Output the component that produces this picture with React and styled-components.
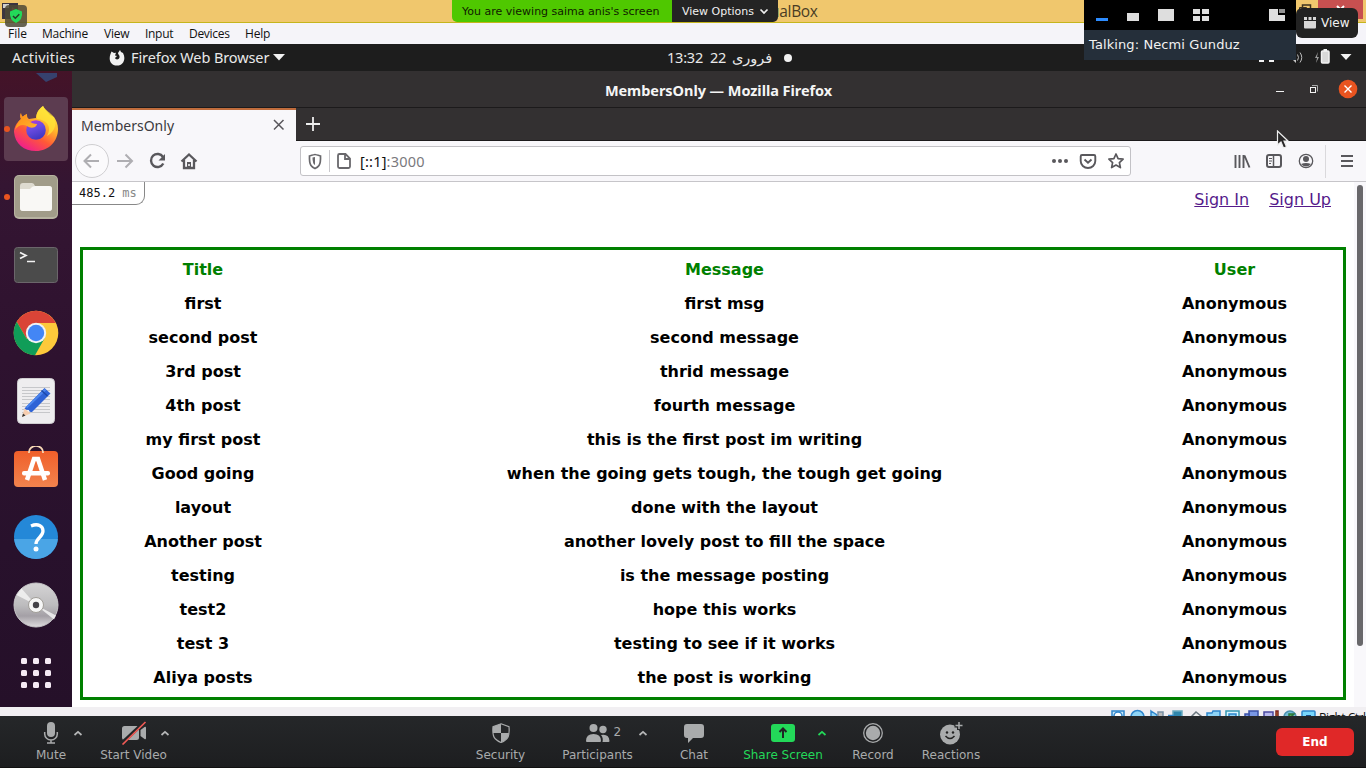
import React from 'react';
import styled, { createGlobalStyle } from 'styled-components';

const ubuntu = '"Noto Sans", "Open Sans", "DejaVu Sans", sans-serif';
const dejavu = '"DejaVu Sans", sans-serif';

const GlobalStyle = createGlobalStyle`
  * { box-sizing: border-box; }
  body { margin: 0; overflow: hidden; background: #000; }
  svg { display: block; flex: none; }
`;

const Screen = styled.div`
  position: relative;
  width: 1366px;
  height: 768px;
  display: flex;
  flex-direction: column;
  overflow: hidden;
  font-family: ${dejavu};
  white-space: nowrap;
`;

/* Host window */
const HostTitle = styled.header`
  position: relative;
  height: 23px;
  flex: none;
  background: #f0c76d;
  border-bottom: 1px solid #c5b51d;
  padding-left: 770px;
  font: 15.5px/23px "Open Sans", sans-serif;
  letter-spacing: -0.3px;
  color: #4a3c24;
`;
const HostControls = styled.div`
  position: absolute;
  right: 3px;
  top: 0;
  display: flex;
`;
const HostClose = styled.div`
  width: 45px;
  height: 19px;
  background: #c75050;
`;
const HostMenu = styled.nav`
  height: 21px;
  flex: none;
  display: flex;
  background: #f5f4f9;
  font: 12px/22px "Open Sans", sans-serif;
  color: #111;
`;
const HostMenuItem = styled.span`
  width: ${(p) => p.$w}px;
  margin-left: ${(p) => p.$gap}px;
  letter-spacing: ${(p) => p.$ls || 0}px;
`;

/* Guest desktop */
const TopBar = styled.div`
  height: 27px;
  flex: none;
  display: flex;
  align-items: center;
  background: #1d1d1d;
  color: #e9e9e9;
  font: 14.5px/27px ${ubuntu};
`;
const TopText = styled.span`
  width: ${(p) => p.$w}px;
  margin-left: ${(p) => p.$gap}px;
  letter-spacing: ${(p) => p.$ls || 0}px;
`;
const Dot = styled.i`
  width: 8px;
  height: 8px;
  margin-left: 9px;
  border-radius: 50%;
  background: #f2f2f2;
`;
const Tray = styled.div`
  margin-left: auto;
  display: flex;
`;
const Desktop = styled.div`
  height: 636px;
  flex: none;
  display: flex;
`;
const Dock = styled.aside`
  width: 72px;
  flex: none;
  display: flex;
  flex-direction: column;
  background: linear-gradient(#441328 0, #341532 18%, #2e122f 45%, #28112c 75%, #251029 100%);
`;
const DockPeek = styled.div`
  height: 24px;
  padding: 2px 0 0 36px;
`;
const DockItem = styled.div`
  position: relative;
  width: 64px;
  height: 64px;
  margin: 2px 4px;
  border-radius: 4px;
  display: flex;
  align-items: center;
  justify-content: center;
  background: ${(p) => (p.$active ? '#5c3c50' : 'transparent')};
  &::before {
    content: "";
    display: ${(p) => (p.$running ? 'block' : 'none')};
    position: absolute;
    left: 0;
    top: 29px;
    width: 6px;
    height: 6px;
    border-radius: 50%;
    background: #e95420;
  }
`;
const Browser = styled.section`
  flex: 1;
  display: flex;
  flex-direction: column;
  background: #fff;
`;
const WindowTitle = styled.div`
  position: relative;
  height: 37px;
  flex: none;
  background: #333031;
  border-bottom: 1px solid #1c1a1b;
  text-align: center;
  padding-right: 1px;
  font: bold 14.5px/38px ${ubuntu};
  letter-spacing: -0.05px;
  color: #f5f5f5;
`;
const WindowButtons = styled.div`
  position: absolute;
  right: 7px;
  top: 8px;
`;
const TabStrip = styled.div`
  height: 33px;
  flex: none;
  display: flex;
  background: #333031;
  border-bottom: 1px solid #1c1a1b;
`;
const Tab = styled.div`
  width: 224px;
  height: 33px;
  padding: 0 10px 1px 9px;
  display: flex;
  align-items: center;
  justify-content: space-between;
  background: #f8f7fa;
  border-top: 2px solid #c06c3c;
  font: 14px/29px ${ubuntu};
  color: #3c3a40;
`;
const NewTab = styled.div`
  padding: 9px 0 0 10px;
`;
const NavBar = styled.div`
  height: 41px;
  flex: none;
  display: flex;
  align-items: center;
  background: #f8f7fa;
  border-bottom: 1px solid #c6c5c9;
`;
const NavIcons = styled.div`
  width: 228px;
`;
const UrlBar = styled.div`
  width: 831px;
  height: 30px;
  display: flex;
  align-items: center;
  background: #fff;
  border: 1px solid #c3c2c6;
  border-radius: 3px;
  font: 14.5px/29px ${ubuntu};
  color: #7a797d;
`;
const Host = styled.b`
  font-weight: 400;
  color: #0c0c0d;
`;
const Url = styled.span`
  margin-left: 4px;
  flex: 1;
  letter-spacing: 0.2px;
`;
const MenuIcons = styled.div`
  margin-left: auto;
`;

/* Page */
const Page = styled.main`
  position: relative;
  flex: 1;
  background: #fff;
  padding: 0 20px 0 8px;
`;
const Timer = styled.div`
  position: absolute;
  left: 0;
  top: 0;
  width: 73px;
  height: 23px;
  padding-left: 7px;
  border: 1px solid #888;
  border-width: 0 1px 1px 0;
  border-radius: 0 0 9px 0;
  font: 12px/22px "DejaVu Sans Mono", monospace;
  color: #111;
  span { color: #888; }
`;
const Links = styled.nav`
  height: 65px;
  display: flex;
  justify-content: flex-end;
  gap: 20px;
  padding: 8px 15px 0 0;
  font-size: 16px;
  line-height: 19px;
`;
const Link = styled.a`
  color: #551a8b;
  text-decoration: underline;
`;
const Table = styled.div`
  height: 453px;
  padding: 3px 0 2px;
  border: 3px solid #008000;
`;
const Row = styled.div`
  display: grid;
  grid-template-columns: 240px 803px 217px;
  height: 34px;
  text-align: center;
  font: bold 16px/34px ${dejavu};
  color: ${(p) => (p.$head ? '#008000' : '#000')};
`;
const ScrollTrack = styled.div`
  position: absolute;
  right: 0;
  top: 0;
  width: 12px;
  height: 525px;
  padding: 3px 3px;
  background: #f9f8fb;
`;
const ScrollThumb = styled.div`
  height: 461px;
  border-radius: 3px;
  background: #69686b;
`;

const StatusStrip = styled.div`
  height: 9px;
  flex: none;
  display: flex;
  overflow: hidden;
  background: #f1eff2;
  padding-left: 1110px;
`;
const StatusText = styled.span`
  font: 12px/22px "Open Sans", sans-serif;
  color: #111;
  margin-left: 2px;
  letter-spacing: -0.5px;
`;

/* Meeting controls */
const Toolbar = styled.footer`
  height: 52px;
  flex: none;
  display: flex;
  background: linear-gradient(#252729, #1d1e20);
  border-bottom: 1px solid #111;
`;
const Tool = styled.div`
  position: relative;
  width: ${(p) => p.$w}px;
  margin-left: ${(p) => p.$gap}px;
  display: flex;
  flex-direction: column;
  align-items: center;
  font-size: 12px;
  line-height: 14px;
  color: ${(p) => (p.$green ? '#23d959' : '#a9abac')};
`;
const ToolIcon = styled.div`
  height: 32px;
  display: flex;
  align-items: center;
  padding-top: 2px;
`;
const Caret = styled.div`
  position: absolute;
  top: 14px;
  left: ${(p) => p.$x}px;
`;
const Count = styled.span`
  position: absolute;
  left: 61px;
  top: 9px;
`;
const EndButton = styled.button`
  width: 78px;
  height: 28px;
  margin: 12px 12px 0 auto;
  padding: 0;
  border: 0;
  border-radius: 6px;
  background: #e02828;
  color: #fff;
  font: bold 12px/28px ${dejavu};
`;

/* Floating meeting overlays */
const ShareBanner = styled.div`
  position: absolute;
  left: 452px;
  top: 0;
  display: flex;
  height: 22px;
  border-radius: 0 0 5px 5px;
  overflow: hidden;
  font-size: 11px;
  line-height: 23px;
`;
const Viewing = styled.span`
  width: 220px;
  padding-left: 10px;
  background: #4fc800;
  color: #102000;
`;
const ViewOptions = styled.span`
  width: 106px;
  padding-left: 10px;
  display: flex;
  align-items: center;
  gap: 5px;
  background: #242424;
  color: #f0f0f0;
`;
const Gallery = styled.div`
  position: absolute;
  left: 1084px;
  top: 0;
  width: 212px;
  height: 60px;
  background: #000;
`;
const Talking = styled.div`
  height: 30px;
  padding-left: 5px;
  background: #252f3a;
  color: #f2f2f2;
  font-size: 13px;
  line-height: 29px;
  letter-spacing: 0.1px;
`;
const ViewButton = styled.div`
  position: absolute;
  left: 1296px;
  top: 8px;
  width: 62px;
  height: 30px;
  padding-left: 8px;
  display: flex;
  align-items: center;
  gap: 5px;
  border-radius: 6px;
  background: #222;
  color: #f2f2f2;
  font-size: 12px;
`;
const ShieldBadge = styled.div`
  position: absolute;
  left: 2px;
  top: 2px;
`;
const Cursor = styled.div`
  position: absolute;
  left: 1276px;
  top: 130px;
`;

const posts = [
  ['first', 'first msg'],
  ['second post', 'second message'],
  ['3rd post', 'thrid message'],
  ['4th post', 'fourth message'],
  ['my first post', 'this is the first post im writing'],
  ['Good going', 'when the going gets tough, the tough get going'],
  ['layout', 'done with the layout'],
  ['Another post', 'another lovely post to fill the space'],
  ['testing', 'is the message posting'],
  ['test2', 'hope this works'],
  ['test 3', 'testing to see if it works'],
  ['Aliya posts', 'the post is working'],
];

const FirefoxIcon = () => (
  <svg width="46" height="48" viewBox="0 0 46 48">
    <defs>
      <linearGradient id="fx" x1="0.8" y1="0.05" x2="0.25" y2="0.95">
        <stop offset="0" stopColor="#fff044" /><stop offset=".35" stopColor="#ffb32a" />
        <stop offset=".65" stopColor="#ff5a36" /><stop offset="1" stopColor="#f0208a" />
      </linearGradient>
      <linearGradient id="fxo" x1="0" y1="0" x2="0.4" y2="1">
        <stop offset="0" stopColor="#c035d8" /><stop offset=".5" stopColor="#6a4be0" /><stop offset="1" stopColor="#4338c4" />
      </linearGradient>
      <linearGradient id="fxf" x1="0" y1="0" x2="1" y2="1">
        <stop offset="0" stopColor="#ff8a16" /><stop offset="1" stopColor="#ffb62c" />
      </linearGradient>
    </defs>
    <path d="M8 8c-1 2-1 4 0 6C3 18 1 23 1 27c1 12 10 19 22 19 13 0 22-10 22-22 0-5-2-9-4-12l-4-2c-2-3-5-5-7-9-5 4-7 8-7 12l-7 1c-2-1-2-3-2-5-2 1-4 2-4 3-1-1-2-2-2-4z" fill="url(#fx)" />
    <path d="M30 1c-6 4-7 9-6 13 11 1 15 9 10 17 9-5 10-13 6-20-2-3-7-5-10-10z" fill="#ffe437" opacity=".75" />
    <circle cx="23" cy="25" r="9.800" fill="url(#fxo)" />
    <path d="M8 8c-1 2-1 4 0 6-3 3-5 6-6 11 3-5 8-6 12-4 3 2 5 2 8 1 1-1 2-2 2-3-3 0-6-1-8-3-3-1-3-3-2-7-2 1-4 2-4 3-1-1-2-2-2-4z" fill="url(#fxf)" />
  </svg>
);
const FilesIcon = () => (
  <svg width="44" height="44" viewBox="0 0 44 44">
    <rect width="44" height="44" rx="5" fill="#b7b3a0" />
    <rect x="1" y="1" width="42" height="41" rx="4" fill="#a19c89" />
    <path d="M6 11q0-3 3-3h9q2 0 3 3h14q3 0 3 3v19q0 3-3 3H9q-3 0-3-3z" fill="#dedbd0" />
    <path d="M6 14h10q2-3 5-3h14q3 0 3 3v19q0 3-3 3H9q-3 0-3-3z" fill="#f9f8f5" />
  </svg>
);
const TerminalIcon = () => (
  <svg width="44" height="36" viewBox="0 0 44 36">
    <rect x=".5" y=".5" width="43" height="35" rx="3" fill="#4b4b4b" stroke="#6b666b" />
    <path d="M6 5.5l6 3-6 3M13 14.5h8" fill="none" stroke="#f3f3f3" strokeWidth="1.7" />
  </svg>
);
const ChromeIcon = () => (
  <svg width="46" height="46" viewBox="0 0 46 46">
    <circle cx="23" cy="23" r="22.3" fill="#fdc93b" />
    <path d="M3.7 11.8A22.3 22.3 0 0 1 42.8 13H23L13.5 28.5z" fill="#da4437" />
    <path d="M3.7 11.8A22.3 22.3 0 0 0 22 45.3l9.5-16.8-18 0z" fill="#109d58" />
    <circle cx="23" cy="23" r="10.2" fill="#f1f3f5" />
    <circle cx="23" cy="23" r="8.2" fill="#4386f5" />
  </svg>
);
const EditorIcon = () => (
  <svg width="38" height="46" viewBox="0 0 38 46">
    <rect x=".5" y=".5" width="37" height="45" rx="4" fill="#eeedef" stroke="#cfcdd0" />
    <path d="M5 9.500h28M5 12.500h28M5 15.500h28M5 18.500h28M5 21.500h28M5 25.500h28M5 28.500h28M5 31.500h28M5 34.500h28" stroke="#c6c7ca" strokeWidth="1" />
    <path d="M5 39l2.500-8.500 6 5z" fill="#f6cdb0" /><path d="M5 39l1-3.500 2.500 2z" fill="#333" />
    <path d="M7.500 30.500L27.500 10l6 5.500-18.500 18.500q-3 0-3-2-3 0-4.500-1.500z" fill="#2f63d6" />
    <path d="M9.500 29.500L28.500 11.500" stroke="#4c86ee" strokeWidth="2" />
    <path d="M24.500 12.500l6 5.500" stroke="#1c48a8" strokeWidth="1.500" />
  </svg>
);
const SoftwareIcon = () => (
  <svg width="44" height="46" viewBox="0 0 44 46">
    <defs><linearGradient id="sw" x2="0" y2="1"><stop stopColor="#f05f2a" /><stop offset="1" stopColor="#f2834e" /></linearGradient></defs>
    <rect y="5" width="44" height="36" rx="4" fill="url(#sw)" />
    <path d="M15 7V6a7 6 0 0 1 14 0v1" fill="none" stroke="#f8d9b6" strokeWidth="1.700" />
    <path d="M13 34l7-21h4l7 21" fill="none" stroke="#fff" strokeWidth="4.500" />
    <rect x="8" y="25" width="28" height="4.500" rx="2" fill="#fff" />
  </svg>
);
const HelpIcon = () => (
  <svg width="44" height="44" viewBox="0 0 44 44">
    <circle cx="22" cy="22" r="22" fill="#2488d8" />
    <path d="M.1 24h43.800a22 22 0 0 1-43.800 0z" fill="#4aa5e6" />
    <path d="M17 11c7-3 12 0 12 5 0 6-7 7-7 13" fill="none" stroke="#fff" strokeWidth="3.300" />
    <circle cx="22" cy="34" r="2.500" fill="#fff" />
  </svg>
);
const DiscIcon = () => (
  <svg width="46" height="46" viewBox="0 0 46 46">
    <defs><linearGradient id="cd" x2="0" y2="1"><stop stopColor="#d5d4d5" /><stop offset=".5" stopColor="#bdbcbe" /><stop offset=".75" stopColor="#a4a0a6" /><stop offset="1" stopColor="#dedcde" /></linearGradient></defs>
    <circle cx="23" cy="23" r="22" fill="url(#cd)" stroke="#c9c8ca" />
    <path d="M23 23L3.500 13l5-6.500zM23 23l18 14.500 2-4z" fill="#f3f3f3" opacity=".85" />
    <circle cx="23" cy="23" r="7.500" fill="#f6f6f6" stroke="#a19e98" /><circle cx="23" cy="23" r="3.200" fill="#444248" />
  </svg>
);
const AppsIcon = () => (
  <svg width="30" height="30" viewBox="0 0 30 30" fill="#f5eaf4">
    {[0, 12, 24].map((y) => [0, 12, 24].map((x) => <rect key={`${x}-${y}`} x={x} y={y} width="6" height="6" rx="1.500" />))}
  </svg>
);

const dock = [
  { icon: FirefoxIcon, active: true, running: true },
  { icon: FilesIcon, running: true },
  { icon: TerminalIcon }, { icon: ChromeIcon }, { icon: EditorIcon },
  { icon: SoftwareIcon }, { icon: HelpIcon }, { icon: DiscIcon }, { icon: AppsIcon },
];

const CaretUp = ({ color = '#b5b6b7' }) => (
  <svg width="10" height="6" viewBox="0 0 10 6"><path d="M1.500 5L5 1.800 8.500 5" fill="none" stroke={color} strokeWidth="1.700" /></svg>
);

export default function App() {
  return (
    <Screen>
      <GlobalStyle />
      <HostTitle>
        ualBox
        <HostControls>
          <svg width="20" height="19" fill="none" stroke="#3c331f"><path d="M4.500 7v-2h8v7h-2" strokeWidth="1.500" /><path d="M1.500 7.500h7v5h-7z" /></svg>
          <HostClose><svg width="45" height="19"><path d="M19 6l7 7M26 6l-7 7" stroke="#fff" strokeWidth="2" /></svg></HostClose>
        </HostControls>
      </HostTitle>
      <HostMenu>
        <HostMenuItem $gap={8} $w={34} $ls={0}>File</HostMenuItem>
        <HostMenuItem $gap={0} $w={62} $ls={-0.25}>Machine</HostMenuItem>
        <HostMenuItem $gap={0} $w={41} $ls={-0.25}>View</HostMenuItem>
        <HostMenuItem $gap={0} $w={44} $ls={-0.3}>Input</HostMenuItem>
        <HostMenuItem $gap={0} $w={56} $ls={-0.3}>Devices</HostMenuItem>
        <HostMenuItem $gap={0} $w={40} $ls={-0.2}>Help</HostMenuItem>
      </HostMenu>
      <TopBar>
        <TopText $gap={12} $w={97} $ls={0.25}>Activities</TopText>
        <svg width="16" height="16" viewBox="0 0 16 16">
          <path d="M2.500 1.500L5 3l2-.2L6 5.500 8 6 6 8c.5 2 4 2 4.500-.5C11 5 9 4.500 9 3l2-3 1 2 2 1c3 5 1 12.500-6 12.500S-.5 9 1.500 4z" fill="#f2f2f2" />
        </svg>
        <TopText $gap={6} $w={142} $ls={-0.1}>Firefox Web Browser</TopText>
        <svg width="12" height="7" viewBox="0 0 12 7"><path d="M0 0h12L6 6.500z" fill="#f2f2f2" /></svg>
        <TopText $gap={382} $w={43} $ls={-0.2}>13:32</TopText>
        <TopText $gap={0} $w={22} $ls={-0.2}>22</TopText>
        <TopText $gap={0} $w={43}>فروری</TopText>
        <Dot />
        <Tray>
          <svg width="116" height="27" viewBox="0 0 116 27" fill="#f2f2f2">
            <path d="M9 15h5v3H9zM19 15h5v3h-5z" />
            <path d="M41 11h2l3-3v11l-3-3h-2z" opacity=".8" />
            <path d="M47.500 10.500q2 3 0 6M50 8.500q3.500 5 0 10" fill="none" stroke="#bbb" />
            <path d="M68 8l-3 6h2l-1 5 3-6h-2z" opacity=".6" />
            <rect x="71.500" y="7" width="7.500" height="12" rx="1" stroke="#f2f2f2" strokeWidth="1.500" fill="#d9d9d9" /><path d="M73.500 5h3.500v2h-3.500z" />
            <path d="M90.500 10h11l-5.500 6z" />
          </svg>
        </Tray>
      </TopBar>
      <Desktop>
        <Dock>
          <DockPeek><svg width="21" height="10"><path d="M0 0h21v4l-11 5z" fill="#31558c" opacity=".7" /></svg></DockPeek>
          {dock.map(({ icon: Icon, active, running }, i) => (
            <DockItem key={i} $active={active} $running={running}><Icon /></DockItem>
          ))}
        </Dock>
        <Browser>
          <WindowTitle>
            MembersOnly — Mozilla Firefox
            <WindowButtons>
              <svg width="84" height="20" viewBox="0 0 84 20" fill="none">
                <path d="M1 12.500h8" stroke="#f2f2f2" />
                <path d="M37 6.500h5.500v6" stroke="#aaa" /><rect x="35.500" y="8.500" width="5" height="5" stroke="#f2f2f2" />
                <circle cx="73" cy="10" r="9.300" fill="#e95420" /><path d="M69.500 6.500l7 7M76.500 6.500l-7 7" stroke="#fff" strokeWidth="1.400" />
              </svg>
            </WindowButtons>
          </WindowTitle>
          <TabStrip>
            <Tab>
              MembersOnly
              <svg width="14" height="14"><path d="M2 2l9.500 9.500M11.500 2L2 11.500" stroke="#58565b" strokeWidth="1.500" /></svg>
            </Tab>
            <NewTab><svg width="14" height="14"><path d="M7 0v14M0 7h14" stroke="#eee" strokeWidth="1.800" /></svg></NewTab>
          </TabStrip>
          <NavBar>
            <NavIcons>
              <svg width="228" height="40" viewBox="72 141 228 40" fill="none" stroke="#59585c" strokeWidth="2">
                <circle cx="92" cy="161" r="16.500" fill="#fbfafc" stroke="#cfced1" strokeWidth="1" />
                <path d="M99 161H85.500M91 154.500l-6.500 6.500 6.500 6.500M117 161h14.500M125.500 154.500l6.500 6.500-6.500 6.500" stroke="#afaeb2" />
                <path d="M163 157a6.500 6.500 0 1 0 .3 6.500" strokeWidth="2.400" /><path d="M165 154v6.500h-6.500z" fill="#59585c" stroke="none" />
                <path d="M181.500 161.500l7.500-7 7.500 7M184 160v8h10v-8" strokeWidth="2.300" /><path d="M187 162h4v6h-4z" fill="#59585c" stroke="none" /><circle cx="189" cy="165" r="1" fill="#fff" stroke="none" />
              </svg>
            </NavIcons>
            <UrlBar>
              <svg width="55" height="28" viewBox="301 147 55 28" fill="none" stroke="#69686c">
                <path d="M309.500 156q5-1.500 5.500-1.500t5.500 1.500q.3 7-1.500 9.500-1.500 2-4 3-2.500-1-4-3-1.800-2.500-1.500-9.500z" strokeWidth="1.700" /><path d="M315 157v8q-2.500-1-2.500-7.500z" fill="#69686c" stroke="none" />
                <path d="M329.500 150v22" stroke="#c9c8cc" />
                <path d="M339.500 154h6l4.500 4.500v8q0 1.500-1.500 1.500h-9q-1.500 0-1.500-1.500v-11q0-1.500 1.500-1.500zM345 154v5h5" strokeWidth="1.800" />
              </svg>
              <Url><Host>[::1]</Host>:3000</Url>
              <svg width="80" height="28" viewBox="1050 147 80 28" fill="none" stroke="#59585c" strokeWidth="1.900">
                <g fill="#59585c" stroke="none"><circle cx="1054" cy="161" r="2" /><circle cx="1060" cy="161" r="2" /><circle cx="1066" cy="161" r="2" /></g>
                <path d="M1082 155h12q1.300 0 1.300 1.500v4.500a7.300 7 0 0 1-14.600 0v-4.500q0-1.500 1.300-1.500zM1084.500 159.500l3.500 3.300 3.500-3.300" />
                <path d="M1116 154l2.100 4.600 5 .6-3.700 3.400 1 5-4.400-2.500-4.400 2.500 1-5-3.700-3.400 5-.6z" strokeWidth="1.700" strokeLinejoin="round" />
              </svg>
            </UrlBar>
            <MenuIcons>
              <svg width="146" height="40" viewBox="1220 141 146 40" fill="none" stroke="#59585c" strokeWidth="2">
                <path d="M1235.500 155v13M1239.500 155v13M1243.500 155v13M1244.500 155.500l5 12" strokeWidth="1.900" />
                <rect x="1267" y="155" width="14" height="12" rx="2" /><path d="M1273.500 155v12" strokeWidth="1.500" /><path d="M1269 158.500h3M1269 161h3M1269 163.500h2" strokeWidth="1" />
                <circle cx="1306" cy="161" r="6.700" strokeWidth="1.300" /><circle cx="1306" cy="159" r="3" fill="#59585c" stroke="none" /><path d="M1301 164q5-2 10 0-5 5-10 0z" fill="#59585c" stroke="none" />
                <path d="M1325.500 145v33" stroke="#dad9dc" strokeWidth="1" />
                <path d="M1341 156h12M1341 161h12M1341 166h12" />
              </svg>
            </MenuIcons>
          </NavBar>
          <Page>
            <Timer>485.2 <span>ms</span></Timer>
            <Links><Link>Sign In</Link><Link>Sign Up</Link></Links>
            <Table>
              <Row $head><span>Title</span><span>Message</span><span>User</span></Row>
              {posts.map(([title, message]) => (
                <Row key={title}><span>{title}</span><span>{message}</span><span>Anonymous</span></Row>
              ))}
            </Table>
            <ScrollTrack><ScrollThumb /></ScrollTrack>
          </Page>
        </Browser>
      </Desktop>
      <StatusStrip>
        <svg width="207" height="9" viewBox="1110 707 207 9" fill="#8fd4f5" stroke="#2f86cc" strokeWidth="1.500">
          <rect x="1112" y="711" width="12" height="9" fill="#c6e6f8" /><circle cx="1118" cy="716" r="4" fill="#fff" />
          <circle cx="1137.500" cy="717" r="6.500" />
          <path d="M1151 711l6 4v3h-6z" /><path d="M1158 712h5v6h-5z" fill="#bbb" stroke="#7890a4" />
          <rect x="1173" y="711" width="9" height="7" fill="#2f86ac" stroke="#6baac0" /><path d="M1168 715.500h6" />
          <path d="M1191 717l5-5 5 4-4 4z" fill="#eee" stroke="#6c7880" />
          <path d="M1207 717v-4h5l1-2h7v6z" />
          <rect x="1226" y="711" width="13" height="9" fill="#d7f5ff" stroke="#3597b3" /><rect x="1229" y="714" width="7" height="5" />
          <path d="M1249 711h9v7h-9z" fill="#7997e4" stroke="#3a51a7" /><path d="M1245 714h4v4h-4z" fill="#7997e4" stroke="#3a51a7" />
          <path d="M1264 712h9v6h-9z" fill="#b8b9ed" stroke="#4a4aa0" /><path d="M1276 711h2v6h-2z" fill="#e0a024" stroke="#7c2420" />
          <circle cx="1290" cy="717" r="6" fill="#74bdd8" stroke="#4b8fae" /><path d="M1289 714h5l-5 5z" fill="#55a850" stroke="#28773b" />
          <rect x="1302" y="711" width="13" height="9" rx="1" fill="#78d6fb" /><path d="M1306 715h5v3h-5z" fill="#154c88" stroke="none" />
        </svg>
        <StatusText>Right Ctrl</StatusText>
      </StatusStrip>
      <Toolbar>
        <Tool $gap={21} $w={60}>
          <ToolIcon><svg width="16" height="24" viewBox="0 0 16 24"><rect x="4" y="1" width="8" height="15" rx="4" fill="#a9abac" /><path d="M1.700 11v2a6.300 6 0 0 0 12.600 0v-2M8 19v3M4 22h8" fill="none" stroke="#a9abac" strokeWidth="1.500" /></svg></ToolIcon>
          Mute<Caret $x={52}><CaretUp /></Caret>
        </Tool>
        <Tool $gap={12.5} $w={80}>
          <ToolIcon><svg width="26" height="24" viewBox="0 0 26 24"><rect x="1" y="5" width="17" height="14" rx="2.500" fill="#a9abac" /><path d="M19.500 9l4-3q1.500-1 1.500 1v10q0 2-1.500 1l-4-3z" fill="#a9abac" /><path d="M1.500 21.500L24 .5" stroke="#222426" strokeWidth="3.500" /><path d="M1.500 23.500L24.500 1" stroke="#f05a55" strokeWidth="1.700" /></svg></ToolIcon>
          Start Video<Caret $x={66}><CaretUp /></Caret>
        </Tool>
        <Tool $gap={297} $w={60}>
          <ToolIcon><svg width="18" height="20" viewBox="0 0 18 20"><path d="M9 .8l8 3q.8 9-2.200 12Q12 18.500 9 19.500 6 18.500 3.200 15.800.2 12.800 1 3.800z" fill="#252729" stroke="#a9abac" strokeWidth="1.200" /><path d="M9 .8V10H1Q.800 6 1 3.800zM9 10h8q-.5 4-2.200 5.800Q12 18.500 9 19.500z" fill="#a9abac" /></svg></ToolIcon>
          Security
        </Tool>
        <Tool $gap={22} $w={90}>
          <ToolIcon><svg width="24" height="20" viewBox="0 0 24 20" fill="#a9abac"><circle cx="7.500" cy="5" r="4" /><circle cx="17" cy="6.500" r="3.700" /><path d="M0 18q0-7 7.500-7t7.500 7q0 1-1 1H1q-1 0-1-1zM15 12q8-1.500 8.500 6 0 1-1 1h-6q1-4-1.500-7z" /></svg></ToolIcon>
          <Count>2</Count>Participants<Caret $x={85.5}><CaretUp /></Caret>
        </Tool>
        <Tool $gap={31.5} $w={40}>
          <ToolIcon><svg width="20" height="20" viewBox="0 0 20 20"><path d="M3 1h14q3 0 3 3v8q0 3-3 3H9l-5 5v-5H3q-3 0-3-3V4q0-3 3-3z" fill="#a9abac" /></svg></ToolIcon>
          Chat
        </Tool>
        <Tool $gap={24} $w={90} $green>
          <ToolIcon><svg width="24" height="18" viewBox="0 0 24 18"><rect width="24" height="18" rx="3" fill="#23d959" /><path d="M12 14V5M8.500 8L12 4.500 15.500 8" fill="none" stroke="#202325" strokeWidth="2" /></svg></ToolIcon>
          Share Screen<Caret $x={79}><CaretUp color="#23d959" /></Caret>
        </Tool>
        <Tool $gap={15} $w={60}>
          <ToolIcon><svg width="20" height="20"><circle cx="10" cy="10" r="9.300" fill="none" stroke="#a9abac" strokeWidth="1.300" /><circle cx="10" cy="10" r="7.200" fill="#a9abac" /></svg></ToolIcon>
          Record
        </Tool>
        <Tool $gap={13} $w={70}>
          <ToolIcon><svg width="24" height="24" viewBox="0 0 24 24"><circle cx="11" cy="13.500" r="10" fill="#a9abac" /><path d="M20 0v9M15.500 4.500h9" stroke="#252729" strokeWidth="4" /><path d="M20 1v7M16.500 4.500h7" stroke="#a9abac" strokeWidth="1.500" /><circle cx="8" cy="11.500" r="1.200" fill="#222" /><circle cx="14" cy="11.500" r="1.200" fill="#222" /><path d="M6.500 15q4.500 5 9 0" fill="none" stroke="#222" strokeWidth="1.500" /></svg></ToolIcon>
          Reactions
        </Tool>
        <EndButton>End</EndButton>
      </Toolbar>

      <ShieldBadge>
        <svg width="26" height="26" viewBox="2 2 26 26">
          <path d="M2 3h16v16H2z" fill="#3b3540" /><path d="M3 4h6v4H3z" fill="#cfcfcf" /><path d="M12 7l5 3v5h-6z" fill="#8e7042" />
          <rect x="5" y="5" width="22" height="22" rx="4" fill="#4d4936" opacity=".85" />
          <path d="M16 9l6 2.500q1 8.500-6 11.500-7-3-6-11.500z" fill="#23d959" /><path d="M13 16l2.300 2.200 4-4" fill="none" stroke="#263b28" strokeWidth="1.500" />
        </svg>
      </ShieldBadge>
      <ShareBanner>
        <Viewing>You are viewing saima anis's screen</Viewing>
        <ViewOptions>View Options<svg width="10" height="7"><path d="M1.500 1.500L5 5l3.500-3.500" fill="none" stroke="#eee" strokeWidth="1.700" /></svg></ViewOptions>
      </ShareBanner>
      <Gallery>
        <svg width="212" height="30" viewBox="1084 0 212 30" fill="#dedede">
          <path d="M1096 18h12v3h-12z" fill="#2d8cff" /><path d="M1127 13h12v8h-12zM1158 9h16v12h-16zM1193 9h7v5h-7zM1202 9h7v5h-7zM1193 16h7v5h-7zM1202 16h7v5h-7zM1269 9h9v6h7v6h-16z" /><path d="M1279 9h6v4h-6z" fill="#929292" />
        </svg>
        <Talking>Talking: Necmi Gunduz</Talking>
      </Gallery>
      <ViewButton>
        <svg width="12" height="12" fill="#d8d8d8"><path d="M0 4h12v6.500q0 1-1 1H1q-1 0-1-1zM0 0h3v3H0zM4.500 0h3v3h-3zM9 0h3v3H9z" /></svg>View
      </ViewButton>
      <Cursor><svg width="14" height="20" viewBox="0 0 14 20"><path d="M1.500 1v14l3.500-3 2.500 6 3-1.300-2.500-5.700H12z" fill="#292728" stroke="#eee" strokeWidth="1.200" /></svg></Cursor>
    </Screen>
  );
}
